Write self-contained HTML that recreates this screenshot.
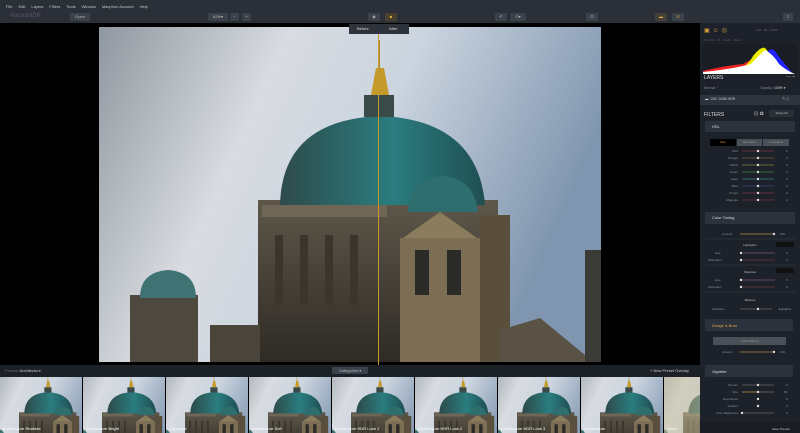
<!DOCTYPE html>
<html style="width:800px;height:433px;overflow:hidden"><head><meta charset="utf-8"><style>
*{margin:0;padding:0;box-sizing:border-box}
body{width:800px;height:433px;overflow:hidden;background:#000;font-family:"Liberation Sans",sans-serif;font-size:4px;color:#aab;position:relative}
.abs{position:absolute}
#menu{left:0;top:0;width:800px;height:13px;background:#2b3038;}
#menu span{display:inline-block;color:#bcc;font-size:4px;margin-left:6px;line-height:13px}
#tool{left:0;top:11px;width:700px;height:12px;background:#2b3038}
#tool2{left:700px;top:11px;width:100px;height:12px;background:#2b3038}
.btn{position:absolute;background:#3c424c;height:8px;border-radius:1px;color:#bbb;font-size:4px;line-height:8px;text-align:center}
#rp{left:700px;top:23px;width:100px;height:410px;background:#1d222a}
.sec{position:absolute;left:705px;width:90px;background:#2c323b;color:#ddd;font-size:4.5px;padding-left:7px}
#strip{left:0;top:365px;width:700px;height:12px;background:#1c2027}
.th{position:absolute;top:377px;width:82px;height:56px;overflow:hidden}
.th span{position:absolute;left:3px;bottom:2px;font-size:4px;color:#fff}
</style></head><body>
<svg width="0" height="0" style="position:absolute"><defs>
<linearGradient id="sky" x1="0" y1="0" x2="1" y2="0.3"><stop offset="0" stop-color="#8f979f"/><stop offset="0.35" stop-color="#d8dce0"/><stop offset="0.6" stop-color="#cbd4df"/><stop offset="1" stop-color="#8096b0"/></linearGradient>
<linearGradient id="dome" x1="0" y1="0" x2="1" y2="0"><stop offset="0" stop-color="#2e4a4a"/><stop offset="0.55" stop-color="#2a7d80"/><stop offset="1" stop-color="#1f4e52"/></linearGradient>
<linearGradient id="stone" x1="0" y1="0" x2="0" y2="1"><stop offset="0" stop-color="#5e574a"/><stop offset="1" stop-color="#2e2b25"/></linearGradient>
<symbol id="scene" viewBox="99 27 502 335">
<rect x="99" y="27" width="502" height="335" fill="url(#sky)"/>
<rect x="258" y="200" width="240" height="162" fill="url(#stone)"/>
<rect x="262" y="205" width="125" height="12" fill="#6f6656"/>
<g fill="#3a362e"><rect x="275" y="235" width="8" height="70"/><rect x="300" y="235" width="8" height="70"/><rect x="325" y="235" width="8" height="70"/><rect x="350" y="235" width="8" height="70"/></g>
<path d="M280 205 Q282 120 380 116 Q478 120 485 205Z" fill="url(#dome)"/>
<rect x="364" y="95" width="30" height="22" fill="#3a4a48"/>
<path d="M371 95 L376 68 L384 68 L389 95Z" fill="#c49a2a"/>
<rect x="378" y="40" width="2" height="30" fill="#b08a30"/>
<path d="M408 212 Q410 178 442 176 Q474 178 478 212Z" fill="#2f6e6e"/>
<path d="M400 240 L440 212 L480 240Z" fill="#8c7c5e"/>
<rect x="400" y="238" width="80" height="124" fill="#7c6e54"/>
<rect x="415" y="250" width="14" height="45" fill="#2a2a26"/><rect x="447" y="250" width="14" height="45" fill="#2a2a26"/>
<rect x="480" y="215" width="30" height="147" fill="#5a4e3c"/>
<rect x="130" y="295" width="68" height="67" fill="#4e493f"/>
<path d="M140 298 Q140 272 168 270 Q196 272 196 298Z" fill="#3f7272"/>
<rect x="210" y="325" width="50" height="37" fill="#4a443a"/>
<path d="M500 330 L540 318 L585 355 L585 362 L500 362Z" fill="#5a5244"/>
<rect x="585" y="250" width="16" height="112" fill="#3a3a36"/>
</symbol></defs></svg>

<div id="menu" class="abs"><span>File</span><span>Edit</span><span>Layers</span><span>Filters</span><span>Tools</span><span>Window</span><span>Macphun Account</span><span>Help</span></div>
<div id="tool" class="abs">
<div class="abs" style="left:10px;top:2px;color:#556;font-size:6px">AuroraHDR</div>
<div class="btn" style="left:70px;top:2px;width:20px">Open</div>
<div class="btn" style="left:208px;top:2px;width:20px">62%▾</div>
<div class="btn" style="left:230px;top:2px;width:9px">−</div>
<div class="btn" style="left:242px;top:2px;width:9px">+</div>
<div class="btn" style="left:368px;top:2px;width:12px">◉</div>
<div class="btn" style="left:385px;top:2px;width:12px;background:#4a4030;color:#e9b53c">■</div>
<div class="btn" style="left:495px;top:2px;width:12px">↶</div>
<div class="btn" style="left:510px;top:2px;width:16px">⊙▾</div>
<div class="btn" style="left:586px;top:2px;width:12px">⊡</div>
<div class="btn" style="left:655px;top:2px;width:12px;background:#45403a;color:#e9b53c">▬</div>
<div class="btn" style="left:672px;top:2px;width:12px;color:#e9b53c">☷</div>
</div>
<div id="tool2" class="abs"><div class="btn" style="left:83px;top:2px;width:10px">⇪</div></div>

<svg class="abs" style="left:99px;top:27px" width="502" height="335"><use href="#scene" width="502" height="335"/></svg>
<div class="abs" style="left:378px;top:27px;width:1px;height:338px;background:#c59a2e"></div>
<div class="abs" style="left:349px;top:24px;width:60px;height:10px;background:#2e333b;color:#ddd;font-size:4px;line-height:10px"><span style="position:absolute;left:8px">Before</span><span style="position:absolute;left:40px">After</span></div>

<div id="rp" class="abs"></div>
<div class="abs" style="left:704px;top:27px;color:#d9a23a;font-size:6px;letter-spacing:3px">▣☺◎</div>
<div class="abs" style="left:756px;top:28px;color:#667;font-size:3px">ISO · f/8 · 1/125</div>
<div class="abs" style="left:703px;top:38px;color:#556;font-size:3px">ISO 100 · f/8 · 1/125 · 24mm</div>
<svg class="abs" style="left:703px;top:44px" width="94" height="30"><rect width="94" height="30" fill="#1a1e24"/>
<path d="M0 30 L0 27 Q20 22 40 20 Q50 15 55 10 L62 30Z" fill="#e22"/>
<path d="M30 30 Q45 22 50 12 Q58 2 62 4 Q66 8 70 15 L72 30Z" fill="#ee0"/>
<path d="M60 30 L64 8 Q70 2 74 10 Q80 18 86 25 L90 30Z" fill="#22f"/>
<path d="M0 30 L0 28 Q30 25 48 20 Q55 12 62 6 Q70 10 76 20 Q84 27 92 30Z" fill="#fff"/></svg>
<div class="abs" style="left:704px;top:75px;color:#ddd;font-size:5px">LAYERS</div>
<div class="abs" style="left:786px;top:74px;color:#889;font-size:5px">— +</div>
<div class="abs" style="left:704px;top:86px;color:#889;font-size:3.5px">Normal ⌃</div>
<div class="abs" style="left:760px;top:86px;color:#889;font-size:3.5px">Opacity: <span style="color:#ddd">100% ▾</span></div>
<div class="abs" style="left:700px;top:95px;width:100px;height:10px;background:#2e343d"></div>
<div class="abs" style="left:705px;top:97px;color:#ccc;font-size:3.5px">▬ &nbsp;DSC 0268 HDR</div>
<div class="abs" style="left:782px;top:96px;color:#aaa;font-size:4px">✎ ▯</div>
<div class="abs" style="left:704px;top:112px;color:#ddd;font-size:5px">FILTERS</div>
<div class="abs" style="left:754px;top:111px;color:#ccc;font-size:5px">⊡ ✿</div>
<div class="btn" style="left:769px;top:110px;width:25px;height:7px;line-height:7px;font-size:3px;background:#2a3038">Reset All</div>
<div class="sec" style="top:121px;height:11px;line-height:11px;font-size:4px">HSL</div>
<div class="abs" style="left:710px;top:139px;width:26px;height:7px;background:#000;color:#e9a23a;font-size:3px;text-align:center;line-height:7px">Hue</div>
<div class="abs" style="left:737px;top:139px;width:25px;height:7px;background:#4a5058;color:#999;font-size:3px;text-align:center;line-height:7px">Saturation</div>
<div class="abs" style="left:763px;top:139px;width:26px;height:7px;background:#4a5058;color:#999;font-size:3px;text-align:center;line-height:7px">Luminance</div>
<svg class="abs" style="left:700px;top:148px" width="100" height="60" font-family="Liberation Sans" font-size="3" fill="#8a8f99">
<g text-anchor="end"><text x="38" y="4">Red</text><text x="38" y="11">Orange</text><text x="38" y="18">Yellow</text><text x="38" y="25">Green</text><text x="38" y="32">Aqua</text><text x="38" y="39">Blue</text><text x="38" y="46">Purple</text><text x="38" y="53">Magenta</text></g>
<g stroke-width="0.6"><line x1="42" y1="3" x2="74" y2="3" stroke="#a34"/><line x1="42" y1="10" x2="74" y2="10" stroke="#a73"/><line x1="42" y1="17" x2="74" y2="17" stroke="#aa4"/><line x1="42" y1="24" x2="74" y2="24" stroke="#4a4"/><line x1="42" y1="31" x2="74" y2="31" stroke="#4aa"/><line x1="42" y1="38" x2="74" y2="38" stroke="#45a"/><line x1="42" y1="45" x2="74" y2="45" stroke="#a36"/><line x1="42" y1="52" x2="74" y2="52" stroke="#a35"/></g>
<g fill="#ddd"><circle cx="58" cy="3" r="1.2"/><circle cx="58" cy="10" r="1.2"/><circle cx="58" cy="17" r="1.2"/><circle cx="58" cy="24" r="1.2"/><circle cx="58" cy="31" r="1.2"/><circle cx="58" cy="38" r="1.2"/><circle cx="58" cy="45" r="1.2"/><circle cx="58" cy="52" r="1.2"/></g>
<g><text x="86" y="4">0</text><text x="86" y="11">0</text><text x="86" y="18">0</text><text x="86" y="25">0</text><text x="86" y="32">0</text><text x="86" y="39">0</text><text x="86" y="46">0</text><text x="86" y="53">0</text></g>
</svg>
<div class="sec" style="top:212px;height:12px;line-height:12px;font-size:4px">Color Toning</div>
<svg class="abs" style="left:700px;top:226px" width="100" height="207" font-family="Liberation Sans" font-size="3" fill="#8a8f99">
<text x="22" y="9">Amount</text><line x1="40" y1="8" x2="74" y2="8" stroke="#b08a40" stroke-width="0.8"/><circle cx="74" cy="8" r="1.2" fill="#ddd"/><text x="80" y="9">100</text>
<line x1="5" y1="13" x2="95" y2="13" stroke="#2a3038"/>
<text x="50" y="20" text-anchor="middle" fill="#bbb">Highlights</text><rect x="76" y="16" width="18" height="5" fill="#111"/>
<text x="15" y="28">Hue</text><line x1="41" y1="27" x2="75" y2="27" stroke="#a6a" stroke-width="0.6"/><circle cx="41" cy="27" r="1.2" fill="#ddd"/><text x="86" y="28">0</text>
<text x="8" y="35">Saturation</text><line x1="41" y1="34" x2="75" y2="34" stroke="#844" stroke-width="0.6"/><circle cx="41" cy="34" r="1.2" fill="#ddd"/><text x="86" y="35">0</text>
<line x1="5" y1="39" x2="95" y2="39" stroke="#2a3038"/>
<text x="50" y="47" text-anchor="middle" fill="#bbb">Shadows</text><rect x="76" y="42" width="18" height="5" fill="#111"/>
<text x="15" y="55">Hue</text><line x1="41" y1="54" x2="75" y2="54" stroke="#a6a" stroke-width="0.6"/><circle cx="41" cy="54" r="1.2" fill="#ddd"/><text x="86" y="55">0</text>
<text x="8" y="62">Saturation</text><line x1="41" y1="61" x2="75" y2="61" stroke="#844" stroke-width="0.6"/><circle cx="41" cy="61" r="1.2" fill="#ddd"/><text x="86" y="62">0</text>
<line x1="5" y1="66" x2="95" y2="66" stroke="#2a3038"/>
<text x="50" y="75" text-anchor="middle" fill="#bbb">Balance</text>
<text x="12" y="84">Shadows</text><line x1="40" y1="83" x2="72" y2="83" stroke="#888" stroke-width="0.6"/><circle cx="58" cy="83" r="1.2" fill="#ddd"/><text x="78" y="84">Highlights</text>
<rect x="5" y="93" width="88" height="12" fill="#2c323b"/><text x="12" y="101" font-size="4" fill="#e0a850">Dodge &amp; Burn</text>
<rect x="13" y="111" width="73" height="8" fill="#4a5058"/><text x="50" y="116" text-anchor="middle" fill="#999">Start Painting</text>
<text x="22" y="127">Amount</text><line x1="40" y1="126" x2="74" y2="126" stroke="#b08a40" stroke-width="0.8"/><circle cx="74" cy="126" r="1.2" fill="#ddd"/><text x="80" y="127">100</text>
<rect x="5" y="139" width="88" height="12" fill="#2c323b"/><text x="12" y="147" font-size="4" fill="#ddd">Vignette</text>
<text x="38" y="160" text-anchor="end">Amount</text><line x1="42" y1="159" x2="74" y2="159" stroke="#888" stroke-width="0.6"/><circle cx="58" cy="159" r="1.2" fill="#ddd"/><text x="86" y="160">0</text>
<text x="38" y="167" text-anchor="end">Size</text><line x1="42" y1="166" x2="58" y2="166" stroke="#b08a40" stroke-width="0.8"/><line x1="58" y1="166" x2="74" y2="166" stroke="#888" stroke-width="0.6"/><circle cx="58" cy="166" r="1.2" fill="#ddd"/><text x="84" y="167">50</text>
<text x="38" y="174" text-anchor="end">Roundness</text><circle cx="58" cy="173" r="1.2" fill="#ddd"/><text x="86" y="174">0</text>
<text x="38" y="181" text-anchor="end">Feather</text><circle cx="58" cy="180" r="1.2" fill="#ddd"/><text x="86" y="181">0</text>
<text x="38" y="188" text-anchor="end">Inner Brightness</text><line x1="42" y1="187" x2="74" y2="187" stroke="#888" stroke-width="0.6"/><circle cx="42" cy="187" r="1.2" fill="#ddd"/><text x="86" y="188">0</text>
<rect x="0" y="196" width="100" height="11" fill="#1a1e24"/><text x="72" y="204" fill="#ccc">Save Presets</text>
</svg>

<div id="strip" class="abs"><span class="abs" style="left:5px;top:3px;color:#667;font-size:4px">Presets <span style="color:#ccc">Architecture</span></span>
<div class="btn" style="left:332px;top:2px;width:36px;height:7px;line-height:7px">Categories ▾</div>
<span class="abs" style="left:650px;top:3px;color:#ccc;font-size:4px">+ New Preset Overlay</span></div>
<div class="th" style="left:0"><svg width="82" height="56"><use href="#scene" x="-20" y="-6" width="122" height="80"/></svg><span>Architecture Realistic</span></div>
<div class="th" style="left:83px"><svg width="82" height="56"><use href="#scene" x="-20" y="-6" width="122" height="80"/></svg><span>Architecture Bright</span></div>
<div class="th" style="left:166px"><svg width="82" height="56"><use href="#scene" x="-20" y="-6" width="122" height="80"/></svg><span>Cityscape</span></div>
<div class="th" style="left:249px"><svg width="82" height="56"><use href="#scene" x="-20" y="-6" width="122" height="80"/></svg><span>Architecture Soft</span></div>
<div class="th" style="left:332px"><svg width="82" height="56"><use href="#scene" x="-20" y="-6" width="122" height="80"/></svg><span>Architecture HDR Look 1</span></div>
<div class="th" style="left:415px"><svg width="82" height="56"><use href="#scene" x="-20" y="-6" width="122" height="80"/></svg><span>Architecture HDR Look 2</span></div>
<div class="th" style="left:498px"><svg width="82" height="56"><use href="#scene" x="-20" y="-6" width="122" height="80"/></svg><span>Architecture HDR Look 3</span></div>
<div class="th" style="left:581px"><svg width="82" height="56"><use href="#scene" x="-20" y="-6" width="122" height="80"/></svg><span>Architecture</span></div>
<div class="th" style="left:664px;width:36px"><svg width="82" height="56"><rect width="82" height="56" fill="#c9c09a"/><use href="#scene" x="-20" y="-6" width="122" height="80" opacity="0.5"/></svg><span>Warm</span></div>
</body></html>
